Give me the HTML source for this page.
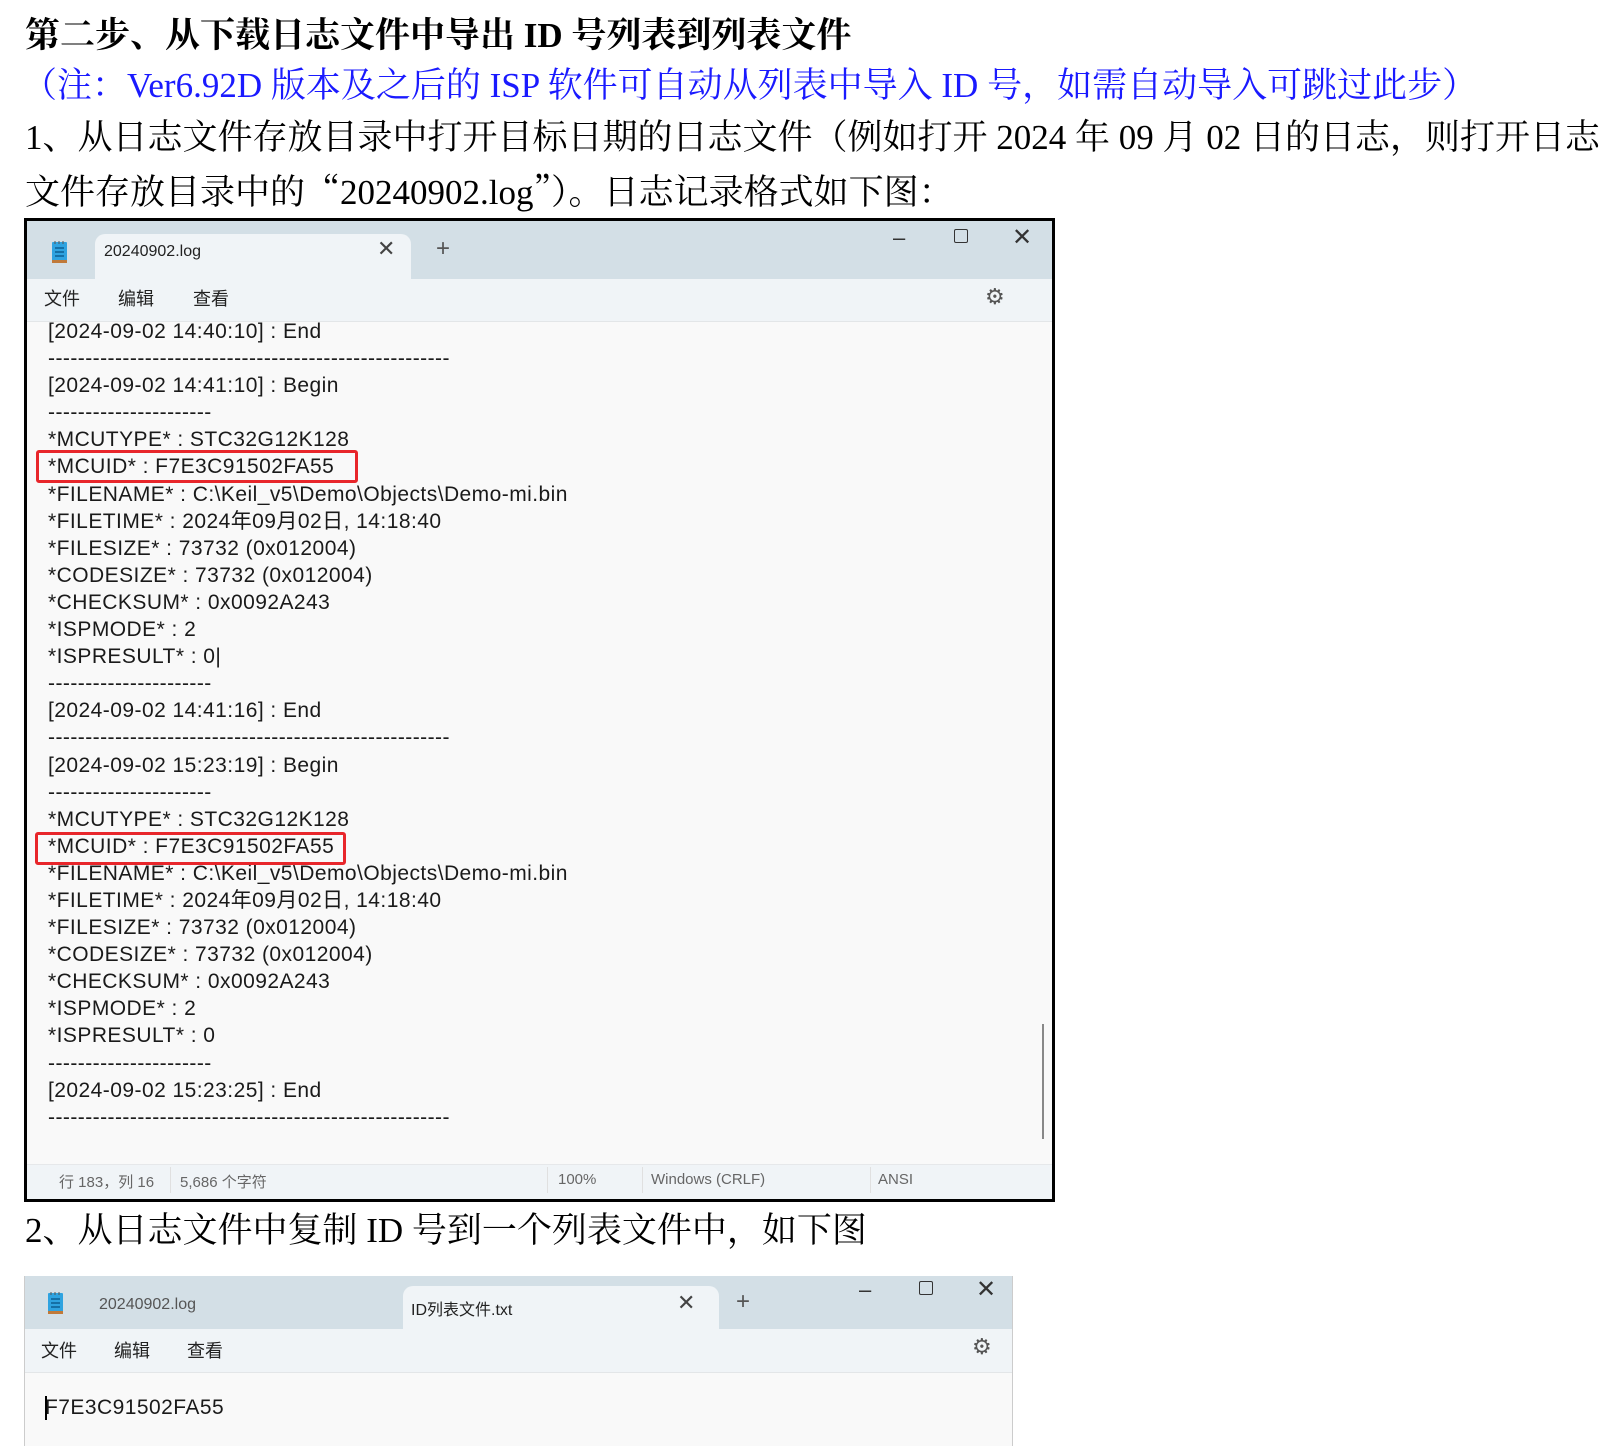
<!DOCTYPE html>
<html><head><meta charset="utf-8"><style>
*{margin:0;padding:0;box-sizing:border-box}
body{width:1609px;height:1439px;background:#fff;position:relative;overflow:hidden;font-family:"Liberation Serif","Noto Serif CJK SC",serif}
.t{position:absolute;left:25px;font-size:35px;line-height:40px;white-space:nowrap;color:#000}
.q{font-family:"Noto Serif CJK SC",serif}
.win{position:absolute;background:#f9f9f9;overflow:hidden}
.tabbar{position:absolute;left:0;right:0;top:0;background:#d3dfe6}
.tab{position:absolute;background:#f0f4f7;border-radius:10px 10px 0 0}
.menu{position:absolute;left:0;right:0;background:#f0f4f7;border-bottom:1px solid #e3e6e8;font-family:"Liberation Sans","Noto Sans CJK SC",sans-serif;font-size:18px;color:#222}
.menu span{position:absolute}
.ui{font-family:"Liberation Sans","Noto Sans CJK SC",sans-serif;position:absolute;white-space:nowrap}
.log{position:absolute;left:48px;font-family:"Liberation Sans","Noto Sans CJK SC",sans-serif;font-size:21px;letter-spacing:0.45px;color:#1a1a1a;line-height:27.1px;white-space:pre}
.red{position:absolute;border:3px solid #e8262b;border-radius:3px}
.st{position:absolute;font-family:"Liberation Sans","Noto Sans CJK SC",sans-serif;font-size:15px;color:#666}
.sep{position:absolute;width:1px;background:#e0e0e0}
</style></head><body>
<div class="t" style="top:16px;font-weight:bold">第二步、从下载日志文件中导出 ID 号列表到列表文件</div>
<div class="t" style="top:66px;color:#1a1aff;left:22px">（注：Ver6.92D 版本及之后的 ISP 软件可自动从列表中导入 ID 号，如需自动导入可跳过此步）</div>
<div class="t" style="top:118px">1、从日志文件存放目录中打开目标日期的日志文件（例如打开 2024 年 09 月 02 日的日志，则打开日志</div>
<div class="t" style="top:170px">文件存放目录中的<span class="q">“</span>20240902.log<span class="q">”</span>）<span class="q">。</span>日志记录格式如下图：</div>

<!-- window 1 -->
<div class="win" style="left:24px;top:218px;width:1031px;height:984px;border:3px solid #000">
  <div class="tabbar" style="height:58px"></div>
  <div class="tab" style="left:68px;top:13px;width:316px;height:45px"></div>
  <svg class="ui" style="left:22px;top:18px" width="22" height="26" viewBox="0 0 22 26"><rect x="3" y="3" width="15" height="20" rx="1" fill="#2fa3e0"/><rect x="3" y="21" width="15" height="3" fill="#c07a3a"/><path d="M6 9h9M6 13h9M6 17h9" stroke="#0d5f93" stroke-width="1.5"/><path d="M6 2v3M10 2v3M14 2v3" stroke="#555" stroke-width="1"/></svg>
  <div class="ui" style="left:77px;top:22px;font-size:16px;color:#222">20240902.log</div>
  <div class="ui" style="left:350px;top:15px;font-size:22px;color:#444">✕</div>
  <div class="ui" style="left:409px;top:14px;font-size:24px;color:#555">+</div>
  <div class="ui" style="left:866px;top:4px;font-size:22px;color:#333">–</div>
  <div class="ui" style="left:927px;top:8px;width:14px;height:14px;border:1.5px solid #333;border-radius:2px"></div>
  <div class="ui" style="left:985px;top:2px;font-size:24px;color:#333">✕</div>
  <div class="menu" style="top:58px;height:43px">
    <span style="left:17px;top:6px">文件</span><span style="left:91px;top:6px">编辑</span><span style="left:166px;top:6px">查看</span>
    <span style="left:958px;top:5px;font-size:22px;color:#555">⚙</span>
  </div>
  <div class="log" style="top:97px;left:21px">[2024-09-02 14:40:10] : End
------------------------------------------------------
[2024-09-02 14:41:10] : Begin
----------------------
*MCUTYPE* : STC32G12K128
*MCUID* : F7E3C91502FA55
*FILENAME* : C:\Keil_v5\Demo\Objects\Demo-mi.bin
*FILETIME* : 2024年09月02日, 14:18:40
*FILESIZE* : 73732 (0x012004)
*CODESIZE* : 73732 (0x012004)
*CHECKSUM* : 0x0092A243
*ISPMODE* : 2
*ISPRESULT* : 0|
----------------------
[2024-09-02 14:41:16] : End
------------------------------------------------------
[2024-09-02 15:23:19] : Begin
----------------------
*MCUTYPE* : STC32G12K128
*MCUID* : F7E3C91502FA55
*FILENAME* : C:\Keil_v5\Demo\Objects\Demo-mi.bin
*FILETIME* : 2024年09月02日, 14:18:40
*FILESIZE* : 73732 (0x012004)
*CODESIZE* : 73732 (0x012004)
*CHECKSUM* : 0x0092A243
*ISPMODE* : 2
*ISPRESULT* : 0
----------------------
[2024-09-02 15:23:25] : End
------------------------------------------------------</div>
  <div class="red" style="left:9px;top:229px;width:322px;height:33px"></div>
  <div class="red" style="left:8px;top:611px;width:311px;height:33px"></div>
  <div class="ui" style="left:1015px;top:803px;width:2px;height:115px;background:#888"></div>
  <div style="position:absolute;left:0;right:0;top:943px;height:41px;background:#f0f4f7;border-top:1px solid #e6e8ea"></div>
  <div class="st" style="left:32px;top:950px">行 183，列 16</div>
  <div class="sep" style="left:143px;top:946px;height:26px"></div>
  <div class="st" style="left:153px;top:950px">5,686 个字符</div>
  <div class="sep" style="left:520px;top:946px;height:26px"></div>
  <div class="st" style="left:531px;top:950px">100%</div>
  <div class="sep" style="left:615px;top:946px;height:26px"></div>
  <div class="st" style="left:624px;top:950px">Windows (CRLF)</div>
  <div class="sep" style="left:843px;top:946px;height:26px"></div>
  <div class="st" style="left:851px;top:950px">ANSI</div>
</div>

<div class="t" style="top:1211px">2、从日志文件中复制 ID 号到一个列表文件中，如下图</div>

<!-- window 2 -->
<div class="win" style="left:24px;top:1276px;width:989px;height:170px;border-left:1px solid #ccc;border-right:1px solid #ccc">
  <div class="tabbar" style="height:53px"></div>
  <div class="tab" style="left:378px;top:10px;width:316px;height:43px"></div>
  <svg class="ui" style="left:20px;top:14px" width="22" height="26" viewBox="0 0 22 26"><rect x="3" y="3" width="15" height="20" rx="1" fill="#2fa3e0"/><rect x="3" y="21" width="15" height="3" fill="#c07a3a"/><path d="M6 9h9M6 13h9M6 17h9" stroke="#0d5f93" stroke-width="1.5"/><path d="M6 2v3M10 2v3M14 2v3" stroke="#555" stroke-width="1"/></svg>
  <div class="ui" style="left:74px;top:20px;font-size:16px;color:#555">20240902.log</div>
  <div class="ui" style="left:386px;top:20px;font-size:16px;color:#222">ID列表文件.txt</div>
  <div class="ui" style="left:652px;top:14px;font-size:22px;color:#444">✕</div>
  <div class="ui" style="left:711px;top:12px;font-size:24px;color:#555">+</div>
  <div class="ui" style="left:834px;top:1px;font-size:22px;color:#333">–</div>
  <div class="ui" style="left:894px;top:5px;width:14px;height:14px;border:1.5px solid #333;border-radius:2px"></div>
  <div class="ui" style="left:951px;top:-1px;font-size:24px;color:#333">✕</div>
  <div class="menu" style="top:53px;height:44px">
    <span style="left:16px;top:8px">文件</span><span style="left:89px;top:8px">编辑</span><span style="left:162px;top:8px">查看</span>
    <span style="left:947px;top:5px;font-size:22px;color:#555">⚙</span>
  </div>
  <div class="log" style="left:20px;top:118px">F7E3C91502FA55</div>
  <div class="ui" style="left:20px;top:120px;width:1.5px;height:24px;background:#000"></div>
</div>
</body></html>
